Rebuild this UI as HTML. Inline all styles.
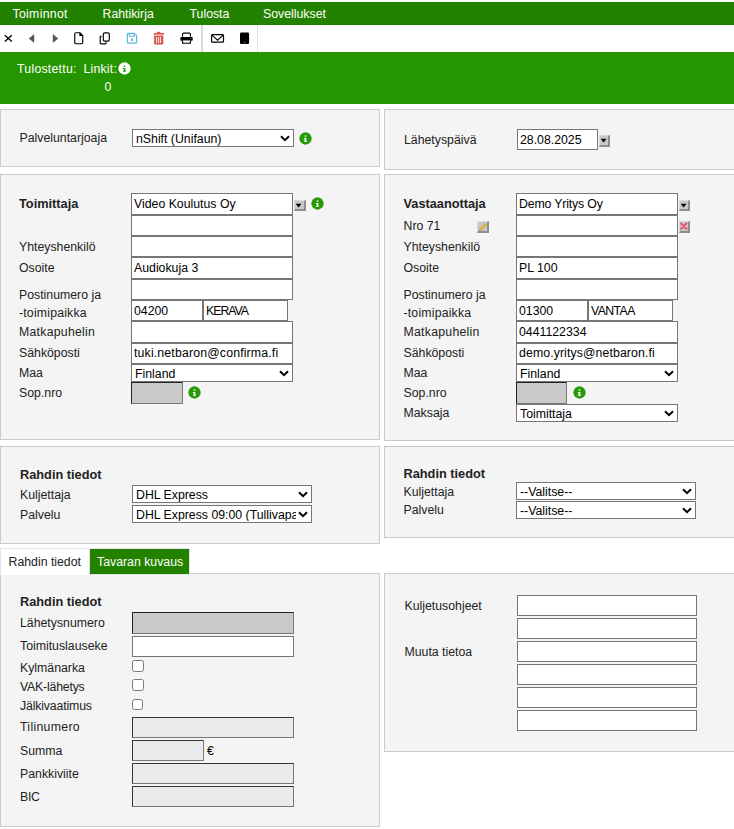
<!DOCTYPE html>
<html><head><meta charset="utf-8"><style>
html,body{margin:0;padding:0;background:#fff;width:734px;height:829px;overflow:hidden;position:relative}
body{font-family:"Liberation Sans",sans-serif}
.t{position:absolute;white-space:nowrap;line-height:1}
.b{position:absolute;box-sizing:border-box}
svg{display:block}
</style></head><body>
<div class="b" style="left:0px;top:0px;width:734px;height:1px;background:#fafbfc;"></div>
<div class="b" style="left:0px;top:2px;width:734px;height:22px;background:#228200;"></div>
<div class="b" style="left:0px;top:24px;width:734px;height:1px;background:#228200;"></div>
<div class="t" style="left:12.5px;top:8px;font-size:12.3px;color:#fff;letter-spacing:0.3px;">Toiminnot</div>
<div class="t" style="left:102.5px;top:8px;font-size:12.3px;color:#fff;">Rahtikirja</div>
<div class="t" style="left:189.5px;top:8px;font-size:12.3px;color:#fff;">Tulosta</div>
<div class="t" style="left:263px;top:8px;font-size:12.3px;color:#fff;">Sovellukset</div>
<div class="b" style="left:201px;top:25px;width:2px;height:27px;background:#d8dae2;"></div>
<div class="b" style="left:257px;top:25px;width:1px;height:27px;background:#e0e0e8;"></div>

<svg class="b" style="left:3px;top:33px" width="11" height="10" viewBox="0 0 11 10"><path d="M1.9 2.2 L8.8 8.5 M8.8 2.2 L1.9 8.5" stroke="#000" stroke-width="1.35"/></svg>
<svg class="b" style="left:28px;top:34px" width="7" height="9" viewBox="0 0 7 9"><path d="M6 0.6 V8.4 L1 4.5Z" fill="#555" stroke="#555" stroke-width="0.4" stroke-linejoin="round"/></svg>
<svg class="b" style="left:52px;top:34px" width="7" height="9" viewBox="0 0 7 9"><path d="M1 0.6 V8.4 L6 4.5Z" fill="#555" stroke="#555" stroke-width="0.4" stroke-linejoin="round"/></svg>
<svg class="b" style="left:74px;top:32px" width="10" height="13" viewBox="0 0 10 13"><path d="M1.8 0.7 H5.8 L8.7 3.6 V10.6 Q8.7 11.7 7.6 11.7 H1.8 Q0.75 11.7 0.75 10.6 V1.8 Q0.75 0.7 1.8 0.7Z" fill="none" stroke="#000" stroke-width="1.15" stroke-linejoin="round"/><path d="M5.4 0.6 H6 L8.9 3.5 V4.1 H5.4Z" fill="#000"/></svg>
<svg class="b" style="left:98px;top:32px" width="13" height="13" viewBox="0 0 13 13"><path d="M3.6 4.4 H2.9 Q2.2 4.4 2.2 5.1 V11.1 Q2.2 11.8 2.9 11.8 H7.4 Q8.1 11.8 8.1 11.1 V10.3" fill="none" stroke="#000" stroke-width="1.15"/><rect x="5.3" y="0.9" width="6" height="8.2" rx="1.4" fill="none" stroke="#000" stroke-width="1.15"/></svg>
<svg class="b" style="left:126px;top:32px" width="12" height="12" viewBox="0 0 12 12"><path d="M2.2 1.4 H8.4 L10.6 3.6 V10.2 Q10.6 11.1 9.7 11.1 H2.2 Q1.4 11.1 1.4 10.2 V2.2 Q1.4 1.4 2.2 1.4Z" fill="none" stroke="#5ab6dd" stroke-width="1.15" stroke-linejoin="round"/><path d="M3.4 1.6 V4.3 H8.2 V1.6" fill="none" stroke="#5ab6dd" stroke-width="1.1"/><circle cx="6" cy="7.8" r="1.25" fill="#5ab6dd"/></svg>
<svg class="b" style="left:152px;top:31px" width="13" height="14" viewBox="0 0 13 14"><rect x="4.9" y="0.8" width="3.3" height="1.4" rx="0.6" fill="#d9534f"/><rect x="1.6" y="1.9" width="10.4" height="1.9" rx="0.5" fill="#d9534f"/><rect x="2.1" y="3.8" width="9.2" height="0.9" fill="#f0c8c8"/><path d="M2.1 4.7 H11.3 V12.4 Q11.3 13.4 10.3 13.4 H3.1 Q2.1 13.4 2.1 12.4Z" fill="#d9534f"/><path d="M4.6 5.9 V11.9 M6.6 5.9 V11.9 M8.6 5.9 V11.9" stroke="#fbe8e8" stroke-width="1.05"/></svg>
<svg class="b" style="left:179px;top:32px" width="15" height="13" viewBox="0 0 15 13"><path d="M3.6 4.8 V2.1 Q3.6 1.1 4.6 1.1 H10.4 Q11.4 1.1 11.4 2.1 V4.8" fill="none" stroke="#000" stroke-width="1.1"/><rect x="1.4" y="4.9" width="12.3" height="3.9" rx="0.8" fill="#000"/><path d="M3.6 8.5 V11.2 H11.4 V8.5" fill="#fff" stroke="#000" stroke-width="1.1"/><rect x="11.3" y="5.8" width="0.9" height="1.2" fill="#4a6a40"/></svg>
<svg class="b" style="left:210px;top:33px" width="15" height="11" viewBox="0 0 15 11"><rect x="1.6" y="1.6" width="11.9" height="7.6" rx="0.9" fill="none" stroke="#000" stroke-width="1.2"/><path d="M2 2.1 L7.55 7.2 L13.1 2.1" fill="none" stroke="#000" stroke-width="1.15"/></svg>
<svg class="b" style="left:239px;top:32px" width="11" height="13" viewBox="0 0 11 13"><rect x="1" y="0.6" width="9.1" height="11.4" rx="1.3" fill="#000"/><rect x="4.6" y="10.1" width="1.8" height="1" fill="#6a7a8a"/></svg>

<div class="b" style="left:0px;top:52px;width:734px;height:52px;background:#269600;"></div>
<div class="t" style="left:17px;top:63px;font-size:12.3px;color:#fff;letter-spacing:0.25px;">Tulostettu:</div>
<div class="t" style="left:83.5px;top:63px;font-size:12.3px;color:#fff;letter-spacing:0.2px;">Linkit:</div>
<svg class="b" style="left:118.1px;top:61.900000000000006px" width="13" height="13" viewBox="0 0 13 13"><circle cx="6.5" cy="6.5" r="6.15" fill="#fff"/><rect x="5.75" y="3.4" width="1.55" height="1.4" fill="#269600"/><path d="M4.9 5.9 H7.3 V8.7 H8 V9.8 H4.9 V8.7 H5.7 V7 H4.9Z" fill="#269600"/></svg>
<div class="t" style="left:104.5px;top:81px;font-size:12.3px;color:#fff;">0</div>
<div class="b" style="left:0px;top:109px;width:380px;height:58px;background:#f4f4f4;border:1px solid #cacaca;"></div>
<div class="t" style="left:19.5px;top:132px;font-size:12.3px;color:#222;">Palveluntarjoaja</div>
<div class="b" style="left:132px;top:129px;width:162px;height:18px;background:#fff;border:1px solid #767676;"></div>
<div class="t" style="left:136px;top:133px;font-size:12.3px;color:#000;">nShift (Unifaun)</div>
<div class="b" style="left:280px;top:135px;width:10px;height:7px;"><svg width="10" height="7" viewBox="0 0 10 7"><path d="M1 1.2 L5 5.2 L9 1.2" fill="none" stroke="#000" stroke-width="2"/></svg></div>
<svg class="b" style="left:299.3px;top:131.8px" width="13" height="13" viewBox="0 0 13 13"><circle cx="6.5" cy="6.5" r="6.15" fill="#269a08"/><rect x="5.75" y="3.4" width="1.55" height="1.4" fill="#fff"/><path d="M4.9 5.9 H7.3 V8.7 H8 V9.8 H4.9 V8.7 H5.7 V7 H4.9Z" fill="#fff"/></svg>
<div class="b" style="left:384px;top:109px;width:377px;height:61px;background:#f4f4f4;border:1px solid #cacaca;"></div>
<div class="t" style="left:404px;top:134px;font-size:12.3px;color:#222;">Lähetyspäivä</div>
<div class="b" style="left:517px;top:129px;width:81px;height:21px;background:#fff;border:1px solid #767676;"></div>
<div class="t" style="left:520px;top:134px;font-size:12.3px;color:#000;">28.08.2025</div>
<div class="b" style="left:599px;top:135px;width:11px;height:12px;background:#c8c8c8;border-top:1px solid #d8d8d8;border-left:1px solid #d8d8d8;border-right:2px solid #8e8e8e;border-bottom:2px solid #8e8e8e;"><svg width="11" height="12" style="position:absolute;left:-1px;top:-1px"><path d="M1.7 3.8 H7.5 L4.6 7.4Z" fill="#000"/></svg></div>
<div class="b" style="left:0px;top:174px;width:380px;height:266px;background:#f4f4f4;border:1px solid #cacaca;"></div>
<div class="t" style="left:19px;top:198px;font-size:12.75px;font-weight:700;color:#222;">Toimittaja</div>
<div class="b" style="left:131px;top:193px;width:162px;height:22px;background:#fff;border:1px solid #767676;"></div>
<div class="t" style="left:134px;top:198px;font-size:12.3px;color:#000;">Video Koulutus Oy</div>
<div class="b" style="left:131px;top:215px;width:162px;height:21px;background:#fff;border:1px solid #767676;"></div>
<div class="b" style="left:131px;top:236px;width:162px;height:21px;background:#fff;border:1px solid #767676;"></div>
<div class="b" style="left:131px;top:257px;width:162px;height:22px;background:#fff;border:1px solid #767676;"></div>
<div class="t" style="left:134px;top:262px;font-size:12.3px;color:#000;">Audiokuja 3</div>
<div class="b" style="left:131px;top:279px;width:162px;height:21px;background:#fff;border:1px solid #767676;"></div>
<div class="b" style="left:131px;top:300px;width:72px;height:21px;background:#fff;border:1px solid #767676;"></div>
<div class="t" style="left:134px;top:305px;font-size:12.3px;color:#000;">04200</div>
<div class="b" style="left:203px;top:300px;width:85px;height:21px;background:#fff;border:1px solid #767676;"></div>
<div class="t" style="left:206px;top:305px;font-size:12.3px;color:#000;letter-spacing:-1.0px;">KERAVA</div>
<div class="b" style="left:131px;top:321px;width:162px;height:22px;background:#fff;border:1px solid #767676;"></div>
<div class="b" style="left:131px;top:343px;width:162px;height:21px;background:#fff;border:1px solid #767676;"></div>
<div class="t" style="left:134px;top:347px;font-size:12.3px;color:#000;letter-spacing:0.16px;">tuki.netbaron@confirma.fi</div>
<div class="b" style="left:131px;top:364px;width:162px;height:18px;background:#fff;border:1px solid #767676;"></div>
<div class="t" style="left:135px;top:368px;font-size:12.3px;color:#000;">Finland</div>
<div class="b" style="left:279px;top:370px;width:10px;height:7px;"><svg width="10" height="7" viewBox="0 0 10 7"><path d="M1 1.2 L5 5.2 L9 1.2" fill="none" stroke="#000" stroke-width="2"/></svg></div>
<div class="b" style="left:131px;top:382px;width:52px;height:22px;background:#c9c9c9;border-top:1px solid #222;border-left:1px solid #222;border-right:1px solid #777;border-bottom:1px solid #777;"></div>
<div class="t" style="left:19.0px;top:241px;font-size:12.3px;color:#222;">Yhteyshenkilö</div>
<div class="t" style="left:19.0px;top:262px;font-size:12.3px;color:#222;">Osoite</div>
<div class="t" style="left:19.0px;top:289px;font-size:12.3px;color:#222;">Postinumero ja</div>
<div class="t" style="left:19.0px;top:307px;font-size:12.3px;color:#222;letter-spacing:0.18px;">-toimipaikka</div>
<div class="t" style="left:19.0px;top:326px;font-size:12.3px;color:#222;letter-spacing:0.25px;">Matkapuhelin</div>
<div class="t" style="left:19.0px;top:347px;font-size:12.3px;color:#222;">Sähköposti</div>
<div class="t" style="left:19.0px;top:367px;font-size:12.3px;color:#222;">Maa</div>
<div class="t" style="left:19.0px;top:387px;font-size:12.3px;color:#222;">Sop.nro</div>
<svg class="b" style="left:187.7px;top:385.8px" width="13" height="13" viewBox="0 0 13 13"><circle cx="6.5" cy="6.5" r="6.15" fill="#269a08"/><rect x="5.75" y="3.4" width="1.55" height="1.4" fill="#fff"/><path d="M4.9 5.9 H7.3 V8.7 H8 V9.8 H4.9 V8.7 H5.7 V7 H4.9Z" fill="#fff"/></svg>
<div class="b" style="left:294px;top:200px;width:12px;height:11px;background:#c8c8c8;border-top:1px solid #d8d8d8;border-left:1px solid #d8d8d8;border-right:2px solid #8e8e8e;border-bottom:2px solid #8e8e8e;"><svg width="12" height="11" style="position:absolute;left:-1px;top:-1px"><path d="M1.7 3.8 H7.5 L4.6 7.4Z" fill="#000"/></svg></div>
<svg class="b" style="left:310.8px;top:196.7px" width="13" height="13" viewBox="0 0 13 13"><circle cx="6.5" cy="6.5" r="6.15" fill="#269a08"/><rect x="5.75" y="3.4" width="1.55" height="1.4" fill="#fff"/><path d="M4.9 5.9 H7.3 V8.7 H8 V9.8 H4.9 V8.7 H5.7 V7 H4.9Z" fill="#fff"/></svg>
<div class="b" style="left:384px;top:174px;width:377px;height:267px;background:#f4f4f4;border:1px solid #cacaca;"></div>
<div class="t" style="left:403.5px;top:198px;font-size:12.75px;font-weight:700;color:#222;">Vastaanottaja</div>
<div class="t" style="left:403.5px;top:220px;font-size:12.3px;color:#222;">Nro 71</div>
<div class="t" style="left:403.5px;top:407px;font-size:12.3px;color:#222;">Maksaja</div>
<div class="b" style="left:516px;top:193px;width:162px;height:22px;background:#fff;border:1px solid #767676;"></div>
<div class="t" style="left:519px;top:198px;font-size:12.3px;color:#000;letter-spacing:-0.15px;">Demo Yritys Oy</div>
<div class="b" style="left:516px;top:215px;width:162px;height:21px;background:#fff;border:1px solid #767676;"></div>
<div class="b" style="left:516px;top:236px;width:162px;height:21px;background:#fff;border:1px solid #767676;"></div>
<div class="b" style="left:516px;top:257px;width:162px;height:22px;background:#fff;border:1px solid #767676;"></div>
<div class="t" style="left:519px;top:262px;font-size:12.3px;color:#000;">PL 100</div>
<div class="b" style="left:516px;top:279px;width:162px;height:21px;background:#fff;border:1px solid #767676;"></div>
<div class="b" style="left:516px;top:300px;width:72px;height:21px;background:#fff;border:1px solid #767676;"></div>
<div class="t" style="left:519px;top:305px;font-size:12.3px;color:#000;">01300</div>
<div class="b" style="left:588px;top:300px;width:85px;height:21px;background:#fff;border:1px solid #767676;"></div>
<div class="t" style="left:591px;top:305px;font-size:12.3px;color:#000;letter-spacing:-0.6px;">VANTAA</div>
<div class="b" style="left:516px;top:321px;width:162px;height:22px;background:#fff;border:1px solid #767676;"></div>
<div class="t" style="left:519px;top:326px;font-size:12.3px;color:#000;">0441122334</div>
<div class="b" style="left:516px;top:343px;width:162px;height:21px;background:#fff;border:1px solid #767676;"></div>
<div class="t" style="left:519px;top:347px;font-size:12.3px;color:#000;letter-spacing:0.1px;">demo.yritys@netbaron.fi</div>
<div class="b" style="left:516px;top:364px;width:162px;height:18px;background:#fff;border:1px solid #767676;"></div>
<div class="t" style="left:520px;top:368px;font-size:12.3px;color:#000;">Finland</div>
<div class="b" style="left:664px;top:370px;width:10px;height:7px;"><svg width="10" height="7" viewBox="0 0 10 7"><path d="M1 1.2 L5 5.2 L9 1.2" fill="none" stroke="#000" stroke-width="2"/></svg></div>
<div class="b" style="left:516px;top:382px;width:51px;height:22px;background:#c9c9c9;border-top:1px solid #222;border-left:1px solid #222;border-right:1px solid #777;border-bottom:1px solid #777;"></div>
<div class="t" style="left:403.5px;top:241px;font-size:12.3px;color:#222;">Yhteyshenkilö</div>
<div class="t" style="left:403.5px;top:262px;font-size:12.3px;color:#222;">Osoite</div>
<div class="t" style="left:403.5px;top:289px;font-size:12.3px;color:#222;">Postinumero ja</div>
<div class="t" style="left:403.5px;top:307px;font-size:12.3px;color:#222;letter-spacing:0.18px;">-toimipaikka</div>
<div class="t" style="left:403.5px;top:326px;font-size:12.3px;color:#222;letter-spacing:0.25px;">Matkapuhelin</div>
<div class="t" style="left:403.5px;top:347px;font-size:12.3px;color:#222;">Sähköposti</div>
<div class="t" style="left:403.5px;top:367px;font-size:12.3px;color:#222;">Maa</div>
<div class="t" style="left:403.5px;top:387px;font-size:12.3px;color:#222;">Sop.nro</div>
<svg class="b" style="left:572.5px;top:385.9px" width="13" height="13" viewBox="0 0 13 13"><circle cx="6.5" cy="6.5" r="6.15" fill="#269a08"/><rect x="5.75" y="3.4" width="1.55" height="1.4" fill="#fff"/><path d="M4.9 5.9 H7.3 V8.7 H8 V9.8 H4.9 V8.7 H5.7 V7 H4.9Z" fill="#fff"/></svg>
<div class="b" style="left:516px;top:404px;width:162px;height:18px;background:#fff;border:1px solid #767676;"></div>
<div class="t" style="left:520px;top:408px;font-size:12.3px;color:#000;">Toimittaja</div>
<div class="b" style="left:664px;top:410px;width:10px;height:7px;"><svg width="10" height="7" viewBox="0 0 10 7"><path d="M1 1.2 L5 5.2 L9 1.2" fill="none" stroke="#000" stroke-width="2"/></svg></div>
<div class="b" style="left:679px;top:200px;width:11px;height:11px;background:#c8c8c8;border-top:1px solid #d8d8d8;border-left:1px solid #d8d8d8;border-right:2px solid #8e8e8e;border-bottom:2px solid #8e8e8e;"><svg width="11" height="11" style="position:absolute;left:-1px;top:-1px"><path d="M1.7 3.8 H7.5 L4.6 7.4Z" fill="#000"/></svg></div>
<div class="b" style="left:477px;top:221px;width:12px;height:12px;background:#c8c8c8;border-top:1px solid #d8d8d8;border-left:1px solid #d8d8d8;border-right:2px solid #8e8e8e;border-bottom:2px solid #8e8e8e;"><svg width="12" height="12" style="position:absolute;left:-1px;top:-1px"><path d="M2.5 9.5 L3 7.5 L8 2.5 L9.5 4 L4.5 9Z" fill="#f0c040" stroke="#b08a20" stroke-width="0.6"/></svg></div>
<div class="b" style="left:679px;top:221px;width:11px;height:12px;background:#c8c8c8;border-top:1px solid #d8d8d8;border-left:1px solid #d8d8d8;border-right:2px solid #8e8e8e;border-bottom:2px solid #8e8e8e;"><svg width="12" height="12" style="position:absolute;left:-1px;top:-1px"><path d="M2 2.3 L7.5 7.8 M7.5 2.3 L2 7.8" stroke="#ee5068" stroke-width="1.9" stroke-linecap="round"/></svg></div>
<div class="b" style="left:0px;top:446px;width:380px;height:98px;background:#f4f4f4;border:1px solid #cacaca;"></div>
<div class="t" style="left:20px;top:469px;font-size:12.75px;font-weight:700;color:#222;">Rahdin tiedot</div>
<div class="t" style="left:20px;top:489px;font-size:12.3px;color:#222;">Kuljettaja</div>
<div class="t" style="left:20px;top:509px;font-size:12.3px;color:#222;">Palvelu</div>
<div class="b" style="left:132px;top:485px;width:180px;height:18px;background:#fff;border:1px solid #767676;"></div>
<div class="t" style="left:136px;top:489px;font-size:12.3px;color:#000;">DHL Express</div>
<div class="b" style="left:298px;top:491px;width:10px;height:7px;"><svg width="10" height="7" viewBox="0 0 10 7"><path d="M1 1.2 L5 5.2 L9 1.2" fill="none" stroke="#000" stroke-width="2"/></svg></div>
<div class="b" style="left:132px;top:505px;width:180px;height:18px;background:#fff;border:1px solid #767676;"></div>
<div class="t" style="left:136px;top:509px;font-size:12.3px;color:#000;overflow:hidden;width:160px;">DHL Express 09:00 (Tullivapaa</div>
<div class="b" style="left:298px;top:511px;width:10px;height:7px;"><svg width="10" height="7" viewBox="0 0 10 7"><path d="M1 1.2 L5 5.2 L9 1.2" fill="none" stroke="#000" stroke-width="2"/></svg></div>
<div class="b" style="left:384px;top:446px;width:377px;height:92px;background:#f4f4f4;border:1px solid #cacaca;"></div>
<div class="t" style="left:403.5px;top:468px;font-size:12.75px;font-weight:700;color:#222;">Rahdin tiedot</div>
<div class="t" style="left:403.5px;top:486px;font-size:12.3px;color:#222;">Kuljettaja</div>
<div class="t" style="left:403.5px;top:504px;font-size:12.3px;color:#222;">Palvelu</div>
<div class="b" style="left:516px;top:482px;width:180px;height:18px;background:#fff;border:1px solid #767676;"></div>
<div class="t" style="left:520px;top:486px;font-size:12.3px;color:#000;">--Valitse--</div>
<div class="b" style="left:682px;top:488px;width:10px;height:7px;"><svg width="10" height="7" viewBox="0 0 10 7"><path d="M1 1.2 L5 5.2 L9 1.2" fill="none" stroke="#000" stroke-width="2"/></svg></div>
<div class="b" style="left:516px;top:501px;width:180px;height:18px;background:#fff;border:1px solid #767676;"></div>
<div class="t" style="left:520px;top:505px;font-size:12.3px;color:#000;">--Valitse--</div>
<div class="b" style="left:682px;top:507px;width:10px;height:7px;"><svg width="10" height="7" viewBox="0 0 10 7"><path d="M1 1.2 L5 5.2 L9 1.2" fill="none" stroke="#000" stroke-width="2"/></svg></div>
<div class="b" style="left:0px;top:573px;width:380px;height:254px;background:#f4f4f4;border:1px solid #cacaca;"></div>
<div class="b" style="left:384px;top:573px;width:377px;height:179px;background:#f4f4f4;border:1px solid #cacaca;"></div>
<div class="b" style="left:0px;top:548px;width:90px;height:27px;background:#fff;border-top:1px solid #e6e6ea;border-right:1px solid #e6e6ea;border-left:1px solid #e6e6ea;"></div>
<div class="t" style="left:8.5px;top:556px;font-size:12.3px;color:#222;">Rahdin tiedot</div>
<div class="b" style="left:89px;top:548px;width:101px;height:27px;background:#228200;border:1px solid #e2e2ea;"></div>
<div class="t" style="left:97px;top:556px;font-size:12.3px;color:#fff;">Tavaran kuvaus</div>
<div class="t" style="left:20px;top:596px;font-size:12.75px;font-weight:700;color:#222;">Rahdin tiedot</div>
<div class="t" style="left:20px;top:617px;font-size:12.3px;color:#222;">Lähetysnumero</div>
<div class="t" style="left:20px;top:640px;font-size:12.3px;color:#222;">Toimituslauseke</div>
<div class="t" style="left:20px;top:662px;font-size:12.3px;color:#222;">Kylmänarka</div>
<div class="t" style="left:20px;top:681px;font-size:12.3px;color:#222;letter-spacing:-0.2px;">VAK-lähetys</div>
<div class="t" style="left:20px;top:700px;font-size:12.3px;color:#222;letter-spacing:-0.15px;">Jälkivaatimus</div>
<div class="t" style="left:20px;top:721px;font-size:12.3px;color:#222;letter-spacing:0.3px;">Tilinumero</div>
<div class="t" style="left:20px;top:745px;font-size:12.3px;color:#222;">Summa</div>
<div class="t" style="left:20px;top:768px;font-size:12.3px;color:#222;">Pankkiviite</div>
<div class="t" style="left:20px;top:791px;font-size:12.3px;color:#222;letter-spacing:-0.3px;">BIC</div>
<div class="b" style="left:132px;top:612px;width:162px;height:22px;background:#c9c9c9;border-top:1px solid #222;border-left:1px solid #222;border-right:1px solid #777;border-bottom:1px solid #777;"></div>
<div class="b" style="left:132px;top:636px;width:162px;height:21px;background:#fff;border:1px solid #767676;"></div>
<div class="b" style="left:132px;top:660px;width:12px;height:12px;border:1px solid #7a7a7a;border-radius:2.5px;background:#fff"></div>
<div class="b" style="left:132px;top:679px;width:12px;height:12px;border:1px solid #7a7a7a;border-radius:2.5px;background:#fff"></div>
<div class="b" style="left:132px;top:699px;width:11px;height:11px;border:1px solid #7a7a7a;border-radius:2.5px;background:#fff"></div>
<div class="b" style="left:132px;top:717px;width:162px;height:21px;background:#e9ebed;border-top:1px solid #333;border-left:1px solid #333;border-right:1px solid #777;border-bottom:1px solid #777;"></div>
<div class="b" style="left:132px;top:740px;width:72px;height:21px;background:#e9ebed;border-top:1px solid #333;border-left:1px solid #333;border-right:1px solid #777;border-bottom:1px solid #777;"></div>
<div class="t" style="left:207px;top:745px;font-size:12.3px;color:#000;">€</div>
<div class="b" style="left:132px;top:763px;width:162px;height:21px;background:#e9ebed;border-top:1px solid #333;border-left:1px solid #333;border-right:1px solid #777;border-bottom:1px solid #777;"></div>
<div class="b" style="left:132px;top:786px;width:162px;height:21px;background:#e9ebed;border-top:1px solid #333;border-left:1px solid #333;border-right:1px solid #777;border-bottom:1px solid #777;"></div>
<div class="t" style="left:404.5px;top:600px;font-size:12.3px;color:#222;">Kuljetusohjeet</div>
<div class="t" style="left:404.5px;top:646px;font-size:12.3px;color:#222;">Muuta tietoa</div>
<div class="b" style="left:517px;top:595px;width:180px;height:21px;background:#fff;border:1px solid #767676;"></div>
<div class="b" style="left:517px;top:618px;width:180px;height:21px;background:#fff;border:1px solid #767676;"></div>
<div class="b" style="left:517px;top:641px;width:180px;height:21px;background:#fff;border:1px solid #767676;"></div>
<div class="b" style="left:517px;top:664px;width:180px;height:21px;background:#fff;border:1px solid #767676;"></div>
<div class="b" style="left:517px;top:687px;width:180px;height:21px;background:#fff;border:1px solid #767676;"></div>
<div class="b" style="left:517px;top:710px;width:180px;height:21px;background:#fff;border:1px solid #767676;"></div>
</body></html>
